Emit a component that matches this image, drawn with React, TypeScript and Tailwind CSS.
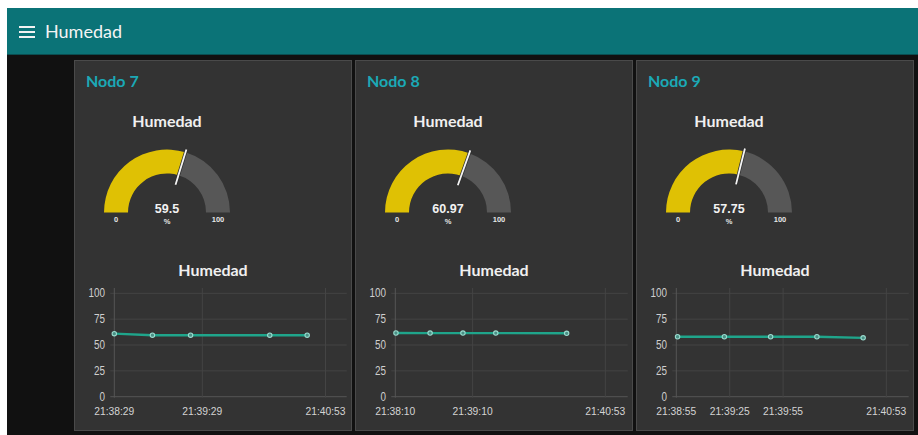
import React from "react";

type Series = {
  node: string;
  gauge: number;
  gaugeLabel: string;
  pxPerSec: number;
  ticks: { label: string; t: number }[];
  points: { t: number; v: number }[];
};

// x positions are seconds from the first tick; pxPerSec maps them onto the axis
const nodes: Series[] = [
  {
    node: "Nodo 7",
    gauge: 59.5,
    gaugeLabel: "59.5",
    pxPerSec: 88 / 60,
    ticks: [
      { label: "21:38:29", t: 0 },
      { label: "21:39:29", t: 60 },
      { label: "21:40:53", t: 144 },
    ],
    points: [
      { t: 0, v: 61 },
      { t: 26, v: 59.5 },
      { t: 52, v: 59.5 },
      { t: 106, v: 59.5 },
      { t: 131.5, v: 59.5 },
    ],
  },
  {
    node: "Nodo 8",
    gauge: 60.97,
    gaugeLabel: "60.97",
    pxPerSec: 210 / 163,
    ticks: [
      { label: "21:38:10", t: 0 },
      { label: "21:39:10", t: 60 },
      { label: "21:40:53", t: 163 },
    ],
    points: [
      { t: 0.5, v: 61.6 },
      { t: 27, v: 61.5 },
      { t: 52.5, v: 61.5 },
      { t: 78, v: 61.5 },
      { t: 133, v: 61.3 },
    ],
  },
  {
    node: "Nodo 9",
    gauge: 57.75,
    gaugeLabel: "57.75",
    pxPerSec: 210 / 118,
    ticks: [
      { label: "21:38:55", t: 0 },
      { label: "21:39:25", t: 30 },
      { label: "21:39:55", t: 60 },
      { label: "21:40:53", t: 118 },
    ],
    points: [
      { t: 0.7, v: 58 },
      { t: 27, v: 58 },
      { t: 53, v: 58 },
      { t: 79, v: 58 },
      { t: 105, v: 56.9 },
    ],
  },
];

const sans = "font-['Lato','Noto_Sans',sans-serif]";
const arial = "'Liberation Sans', Arial, sans-serif";

function Gauge({ value, label }: { value: number; label: string }) {
  const cx = 92;
  const cy = 78.5;
  const ro = 63;
  const ri = 39;
  const a = Math.PI * (1 - value / 100);
  const pt = (r: number, ang: number) => [cx + r * Math.cos(ang), cy - r * Math.sin(ang)];
  const [ox1, oy1] = pt(ro, a);
  const [ix1, iy1] = pt(ri, a);
  const yellow = `M ${cx - ro} ${cy} A ${ro} ${ro} 0 0 1 ${ox1} ${oy1} L ${ix1} ${iy1} A ${ri} ${ri} 0 0 0 ${cx - ri} ${cy} Z`;
  const gray = `M ${ox1} ${oy1} A ${ro} ${ro} 0 0 1 ${cx + ro} ${cy} L ${cx + ri} ${cy} A ${ri} ${ri} 0 0 0 ${ix1} ${iy1} Z`;
  const [n1x, n1y] = pt(29, a);
  const [n2x, n2y] = pt(66, a);
  return (
    <svg width={184} height={95} className="block">
      <path d={yellow} fill="#dfc104" />
      <path d={gray} fill="#575757" />
      <line x1={n1x} y1={n1y} x2={n2x} y2={n2y} stroke="#2a2a2a" strokeWidth={3.2} />
      <line x1={n1x} y1={n1y} x2={n2x} y2={n2y} stroke="#f4f4f4" strokeWidth={1.8} />
      <text x={cx} y={78.5} textAnchor="middle" fontFamily={arial} fontWeight={700} fontSize={12.5} fill="#f2f2f2">
        {label}
      </text>
      <text x={cx} y={90} textAnchor="middle" fontFamily={arial} fontWeight={700} fontSize={7.5} fill="#e6e6e6">
        %
      </text>
      <text x={cx - 51} y={88} textAnchor="middle" fontFamily={arial} fontWeight={700} fontSize={7.5} fill="#e6e6e6">
        0
      </text>
      <text x={cx + 51} y={88} textAnchor="middle" fontFamily={arial} fontWeight={700} fontSize={7.5} fill="#e6e6e6">
        100
      </text>
    </svg>
  );
}

function LineChart({ s }: { s: Series }) {
  const x0 = 39.3;
  const x1 = 271.7;
  const yTop = 10.3;
  const yBot = 113.7;
  const y = (v: number) => yBot - ((yBot - yTop) * v) / 100;
  const x = (t: number) => x0 + t * s.pxPerSec;
  const path = s.points.map((p, i) => `${i ? "L" : "M"} ${x(p.t)} ${y(p.v)}`).join(" ");
  return (
    <svg width={276} height={135} className="block">
      {/* horizontal grid + y labels */}
      {[0, 25, 50, 75, 100].map((v) => (
        <g key={v}>
          <line x1={x0 - 4} x2={x1} y1={y(v)} y2={y(v)} stroke={v === 0 ? "#555" : "#444"} strokeWidth={1} />
          <text
            x={30}
            y={y(v) + 4}
            textAnchor="end"
            fontFamily={arial}
            fontSize={12}
            fill="#cfcfcf"
            textLength={v === 100 ? 16.5 : v === 0 ? 5.5 : 11}
            lengthAdjust="spacingAndGlyphs"
          >
            {v}
          </text>
        </g>
      ))}
      {/* vertical grid + x labels */}
      {s.ticks.map((tk) => (
        <g key={tk.label}>
          <line x1={x(tk.t)} x2={x(tk.t)} y1={5} y2={yBot + 1} stroke={tk.t === 0 ? "#555" : "#444"} strokeWidth={1} />
          <text
            x={x(tk.t)}
            y={132}
            textAnchor="middle"
            fontFamily={arial}
            fontSize={11.5}
            fill="#d4d4d4"
            textLength={40}
            lengthAdjust="spacingAndGlyphs"
          >
            {tk.label}
          </text>
        </g>
      ))}
      <path d={path} fill="none" stroke="#1fa58b" strokeWidth={2.4} />
      {s.points.map((p, i) => (
        <circle key={i} cx={x(p.t)} cy={y(p.v)} r={2.2} fill="#4a8f84" stroke="#9adccf" strokeWidth={1.1} />
      ))}
    </svg>
  );
}

function NodeCard({ s }: { s: Series }) {
  return (
    <div className="flex h-[371px] w-[278px] flex-col border border-[#4a4a4a] bg-[#333333]">
      <div className={`${sans} mt-[10px] pl-[11px] text-[16px] font-bold leading-[20px] text-[#1ba9b6]`}>{s.node}</div>
      <div className="mt-[20px] w-[184px]">
        <div className={`${sans} text-center text-[16px] font-bold leading-[20px] text-[#f0f0f0]`}>Humedad</div>
        <div className="mt-[3px]">
          <Gauge value={s.gauge} label={s.gaugeLabel} />
        </div>
      </div>
      <div className={`${sans} mt-[31px] text-center text-[16px] font-bold leading-[20px] text-[#f0f0f0]`}>Humedad</div>
      <div className="mt-[3px]">
        <LineChart s={s} />
      </div>
    </div>
  );
}

export default function App() {
  return (
    <div className="flex h-[435px] w-[918px] flex-col overflow-hidden bg-white pl-[7px] pt-[8px]">
      <header className="flex h-[47px] shrink-0 items-center border-b border-[#0a4e51] bg-[#0b7377] pl-[12px]">
        <svg width={16} height={12} viewBox="0 0 16 12" className="mt-[1px]">
          <rect x={0} y={0} width={16} height={2} fill="#f2f2f2" />
          <rect x={0} y={5} width={16} height={2} fill="#f2f2f2" />
          <rect x={0} y={10} width={16} height={2} fill="#f2f2f2" />
        </svg>
        <span className={`${sans} ml-[10px] text-[18px] leading-none text-[#f4f4f4]`}>Humedad</span>
      </header>
      <main className="flex flex-1 gap-[3px] bg-[#111111] pl-[67px] pt-[5px]">
        {nodes.map((s) => (
          <NodeCard key={s.node} s={s} />
        ))}
      </main>
    </div>
  );
}
